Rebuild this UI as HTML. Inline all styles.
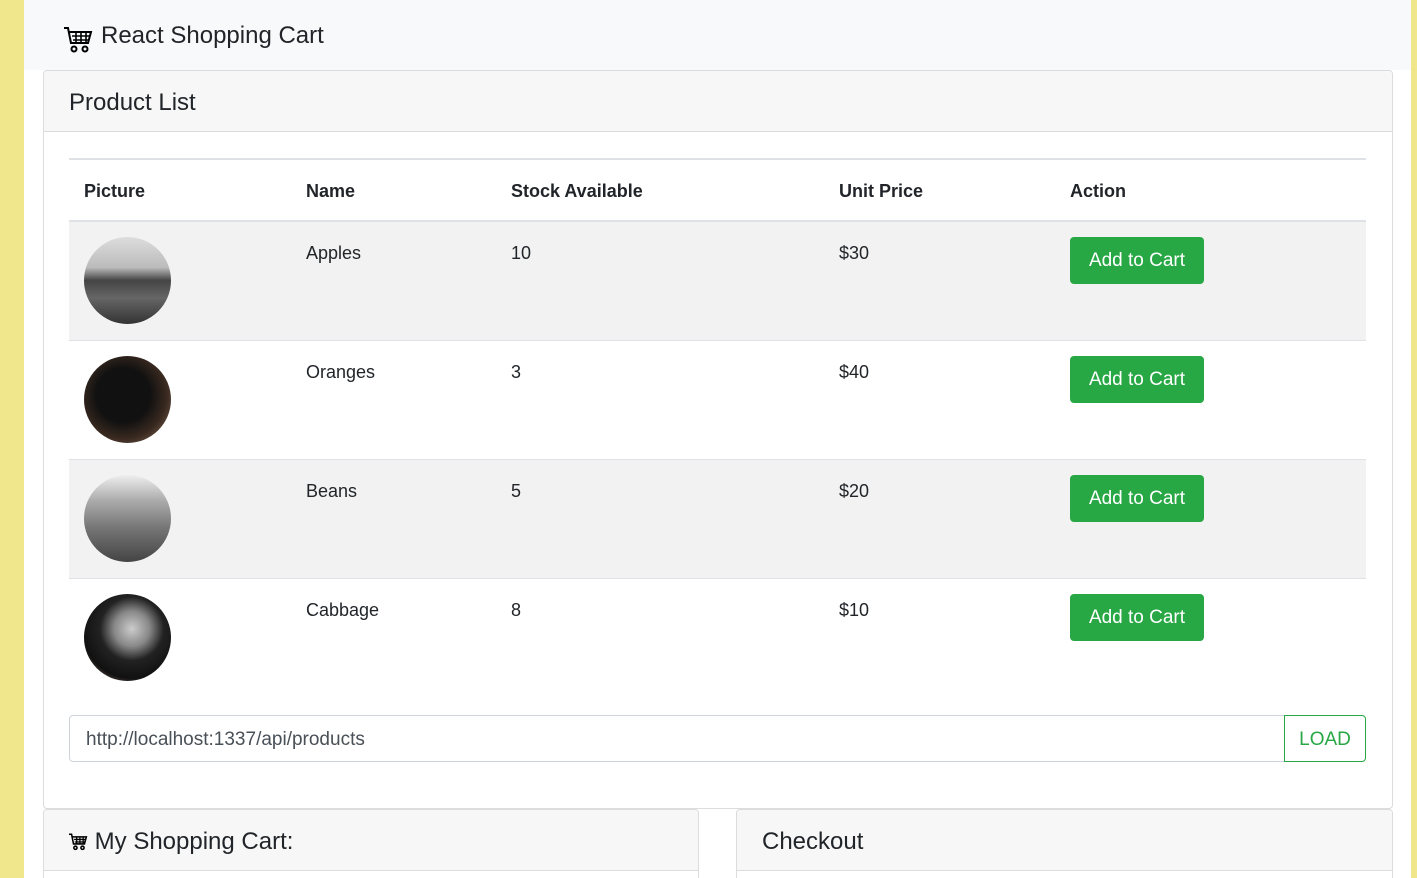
<!DOCTYPE html>
<html style="overflow:hidden;width:1417px;height:878px"><head><style>
*{box-sizing:border-box;margin:0;padding:0}
body{width:1417px;height:878px;overflow:hidden;background:#f0e68c;font-family:"Liberation Sans",sans-serif;color:#212529;position:relative}
.main{position:absolute;left:24px;top:0;width:1387px;height:878px;background:#fff;overflow:hidden}
.nav{height:70px;background:#f8f9fa;position:relative}
.nav .t{position:absolute;left:77px;top:22px;font-size:24px;color:#212529}
.card{position:absolute;border:1px solid #dcdcdc;border-radius:4px;background:#fff;overflow:hidden}
.ch{background:#f7f7f7;border-bottom:1px solid #dcdcdc;height:61px;font-size:24px;padding:18px 25px 0}
table{position:absolute;left:25px;top:87px;width:1297px;border-collapse:collapse;font-size:18px}
th{text-align:left;font-weight:bold;height:62px;padding:3px 15px 0;border-top:2px solid #dee2e6;border-bottom:2px solid #dee2e6;font-size:18px}
td{vertical-align:top;height:119px;padding:21px 15px;border-top:1px solid #dee2e6}
tr.s td{background:#f2f2f2}
td.img{padding:15px 15px}
.c{width:87px;height:87px;border-radius:50%}
.btn{display:inline-block;background:#28a745;color:#fff;border-radius:4px;width:134px;height:47px;line-height:47px;text-align:center;font-size:19px;margin-top:-6px}
.inp{position:absolute;left:25px;top:644px;width:1216px;height:47px;border:1px solid #ced4da;border-radius:4px 0 0 4px;font-size:19px;color:#495057;padding:13px 16px 0}
.load{position:absolute;left:1240px;top:644px;width:82px;height:47px;border:1px solid #28a745;border-radius:0 4px 4px 0;color:#28a745;font-size:19px;text-align:center;padding-top:13px}
</style></head><body>
<div class="main">
<div class="nav">
<svg style="position:absolute;left:39px;top:26px" width="30" height="28" viewBox="0 0 30 28" fill="none" stroke="#000" stroke-width="2"><path d="M1 2h4l3 15h17l3-11H6"/><path d="M9 10h18M10 14h16M13 6v11M18 6v11M23 6v11" stroke-width="1.6"/><circle cx="11" cy="23" r="2.5"/><circle cx="22" cy="23" r="2.5"/></svg>
<div class="t">React Shopping Cart</div>
</div>
<div class="card" style="left:19px;top:70px;width:1350px;height:739px">
<div class="ch">Product List</div>
<table>
<tr><th style="width:222px">Picture</th><th style="width:205px">Name</th><th style="width:328px">Stock Available</th><th style="width:231px">Unit Price</th><th>Action</th></tr>
<tr class="s"><td class="img"><div class="c" style="background:linear-gradient(#ddd 0,#bbb 35%,#444 50%,#666 70%,#333 100%)"></div></td><td>Apples</td><td>10</td><td>$30</td><td><span class="btn">Add to Cart</span></td></tr>
<tr><td class="img"><div class="c" style="background:radial-gradient(circle at 45% 45%,#111 40%,#3a2a20 65%,#9a8070 100%)"></div></td><td>Oranges</td><td>3</td><td>$40</td><td><span class="btn">Add to Cart</span></td></tr>
<tr class="s"><td class="img"><div class="c" style="background:linear-gradient(#eee 0,#aaa 30%,#777 60%,#444 100%)"></div></td><td>Beans</td><td>5</td><td>$20</td><td><span class="btn">Add to Cart</span></td></tr>
<tr><td class="img"><div class="c" style="background:radial-gradient(circle at 55% 40%,#ccc 0,#888 25%,#222 45%,#111 70%,#c9a090 100%)"></div></td><td>Cabbage</td><td>8</td><td>$10</td><td><span class="btn">Add to Cart</span></td></tr>
</table>
<div class="inp">http://localhost:1337/api/products</div>
<div class="load">LOAD</div>
</div>
<div class="card" style="left:19px;top:809px;width:656px;height:100px">
<div class="ch" style="padding-left:24px"><svg width="20" height="18" viewBox="0 0 30 28" fill="none" stroke="#000" stroke-width="2.4" style="vertical-align:-2px"><path d="M1 2h4l3 15h17l3-11H6"/><path d="M9 10h18M10 14h16M13 6v11M18 6v11M23 6v11" stroke-width="2"/><circle cx="11" cy="23" r="2.5"/><circle cx="22" cy="23" r="2.5"/></svg> My Shopping Cart:</div>
</div>
<div class="card" style="left:712px;top:809px;width:657px;height:100px">
<div class="ch">Checkout</div>
</div>
</div>
</body></html>
